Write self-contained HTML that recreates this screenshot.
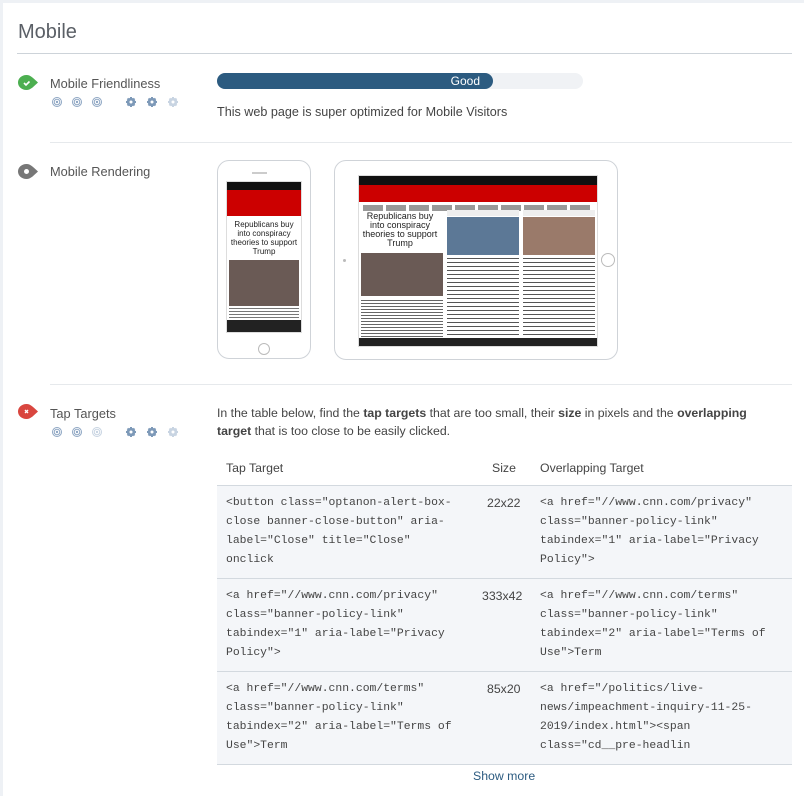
<!DOCTYPE html>
<html><head><meta charset="utf-8"><style>
*{margin:0;padding:0;box-sizing:border-box}
body{width:804px;height:796px;background:#fff;position:relative;overflow:hidden;font-family:"Liberation Sans",sans-serif;color:#444}
.a{position:absolute}
.lbl{font-size:12.8px;color:#555}
.hr{position:absolute;left:50px;right:12px;height:1px;background:#e6e9ec}
.mono{font-family:"Liberation Mono",monospace;font-size:11.4px;line-height:19px;color:#444;white-space:pre}
.row{position:absolute;left:217px;width:575px;height:93px;background:#f4f6f9;border-bottom:1px solid #d3d9df}
.t{font-size:12.3px}
</style></head><body>
<div class="a" style="left:0;top:0;width:804px;height:3px;background:#eef1f5"></div>
<div class="a" style="left:0;top:0;width:3px;height:796px;background:#eef1f5"></div>
<div class="a" style="left:18px;top:21px;font-size:20px;color:#5a5f66">Mobile</div>
<div class="a" style="left:17px;top:53px;width:775px;height:1px;background:#cdd3d9"></div>

<svg width="0" height="0" style="position:absolute"><defs>
<g id="tg"><circle cx="5" cy="5" r="4.5" fill="none" stroke="currentColor" stroke-width="1"/><circle cx="5" cy="5" r="2.8" fill="none" stroke="currentColor" stroke-width="1"/><circle cx="5" cy="5" r="1.2" fill="currentColor"/></g>
<g id="gr"><circle cx="5" cy="5" r="3.3" fill="none" stroke="currentColor" stroke-width="2"/><path d="M5 0V10M0 5H10M1.5 1.5L8.5 8.5M8.5 1.5L1.5 8.5" stroke="currentColor" stroke-width="2"/><circle cx="5" cy="5" r="1.5" fill="#fff"/></g>
<g id="drop"><path d="M9.5 1 C4.5 1 1 4.5 1 8.5 C1 12.5 4.5 16 9.5 16 C14 16 17 12 21 8.5 C17 5 14 1 9.5 1Z" fill="currentColor"/></g>
</defs></svg>

<!-- Row 1 -->
<svg class="a" style="left:17px;top:74px;color:#4caf50" width="22" height="17"><use href="#drop"/><path d="M7 9l2 2 3.5-3.5" stroke="#fff" stroke-width="1.6" fill="none"/></svg>
<div class="a lbl" style="left:50px;top:76px">Mobile Friendliness</div>
<svg class="a" style="left:52px;top:97px" width="130" height="12">
<use href="#tg" x="0" y="0" style="color:#8ea6c3"/><use href="#tg" x="20" y="0" style="color:#8ea6c3"/><use href="#tg" x="40" y="0" style="color:#8ea6c3"/>
<use href="#gr" x="74" y="0" style="color:#7d99b8"/><use href="#gr" x="95" y="0" style="color:#7d99b8"/><use href="#gr" x="116" y="0" style="color:#c8d4e2"/></svg>
<div class="a" style="left:217px;top:73px;width:366px;height:16px;border-radius:8px;background:#f0f2f5"></div>
<div class="a" style="left:217px;top:73px;width:276px;height:16px;border-radius:8px;background:#2c5b80;color:#fff;font-size:12px;line-height:16px;text-align:right;padding-right:13px">Good</div>
<div class="a" style="left:217px;top:105px;font-size:12.6px;color:#444">This web page is super optimized for Mobile Visitors</div>
<div class="hr" style="top:142px"></div>

<!-- Row 2 -->
<svg class="a" style="left:17px;top:163px;color:#777" width="22" height="17"><use href="#drop"/><circle cx="9.5" cy="8.5" r="2.5" fill="#fff"/></svg>
<div class="a lbl" style="left:50px;top:164px">Mobile Rendering</div>
<div class="a" style="left:217px;top:160px;width:94px;height:199px;border:1px solid #cfd3d8;border-radius:12px;background:#fff"></div>
<div class="a" style="left:252px;top:172px;width:15px;height:2px;background:#ccc"></div>
<div class="a" style="left:258px;top:343px;width:12px;height:12px;border:1px solid #bbb;border-radius:50%"></div>
<div class="a" style="left:226px;top:181px;width:76px;height:152px;background:#fff;overflow:hidden;border:1px solid #ddd">
 <div style="height:8px;background:#111"></div><div style="height:26px;background:#c00"></div>
 <div style="font-size:8px;line-height:9px;text-align:center;color:#222;padding:4px 2px">Republicans buy into conspiracy theories to support Trump</div>
 <div style="height:46px;background:#6a5a55;margin:0 2px"></div>
 <div style="height:10px;margin:2px;background:repeating-linear-gradient(#777 0 1px,#fff 1px 3px)"></div>
 <div style="height:20px;background:#222"></div></div>
<div class="a" style="left:334px;top:160px;width:284px;height:200px;border:1px solid #cfd3d8;border-radius:12px;background:#fff"></div>
<div class="a" style="left:601px;top:253px;width:14px;height:14px;border:1px solid #bbb;border-radius:50%"></div>
<div class="a" style="left:343px;top:259px;width:3px;height:3px;border-radius:50%;background:#bbb"></div>
<div class="a" style="left:358px;top:175px;width:240px;height:172px;background:#fff;overflow:hidden;border:1px solid #ddd">
 <div style="height:9px;background:#111"></div><div style="height:17px;background:#c00"></div>
 <div style="height:6px;margin:3px 4px;background:repeating-linear-gradient(90deg,#999 0 20px,#fff 20px 23px)"></div>
 <div style="position:absolute;left:2px;top:36px;width:78px;font-size:9px;line-height:9px;text-align:center;color:#222">Republicans buy into conspiracy theories to support Trump</div>
 <div style="position:absolute;left:2px;top:77px;width:82px;height:43px;background:#6a5a55"></div>
 <div style="position:absolute;left:2px;top:124px;width:82px;height:40px;background:repeating-linear-gradient(#666 0 1px,#fff 1px 3px)"></div>
 <div style="position:absolute;left:88px;top:34px;width:72px;height:6px;background:#eee"></div>
 <div style="position:absolute;left:88px;top:41px;width:72px;height:38px;background:#5c7896"></div>
 <div style="position:absolute;left:88px;top:82px;width:72px;height:82px;background:repeating-linear-gradient(#555 0 1px,#fff 1px 4px)"></div>
 <div style="position:absolute;left:164px;top:34px;width:72px;height:6px;background:#eee"></div>
 <div style="position:absolute;left:164px;top:41px;width:72px;height:38px;background:#9a7a6a"></div>
 <div style="position:absolute;left:164px;top:82px;width:72px;height:82px;background:repeating-linear-gradient(#555 0 1px,#fff 1px 4px)"></div>
 <div style="position:absolute;left:0;bottom:0;width:100%;height:8px;background:#222"></div></div>
<div class="hr" style="top:384px"></div>

<!-- Row 3 -->
<svg class="a" style="left:17px;top:403px;color:#d9463f" width="22" height="17"><use href="#drop"/><path d="M8 7l3 3M11 7l-3 3" stroke="#fff" stroke-width="1.4"/></svg>
<div class="a lbl" style="left:50px;top:406px">Tap Targets</div>
<svg class="a" style="left:52px;top:427px" width="130" height="12">
<use href="#tg" x="0" y="0" style="color:#8ea6c3"/><use href="#tg" x="20" y="0" style="color:#8ea6c3"/><use href="#tg" x="40" y="0" style="color:#c8d4e2"/>
<use href="#gr" x="74" y="0" style="color:#7d99b8"/><use href="#gr" x="95" y="0" style="color:#7d99b8"/><use href="#gr" x="116" y="0" style="color:#c8d4e2"/></svg>
<div class="a" style="left:217px;top:404px;width:560px;font-size:12.3px;line-height:18px;color:#444">In the table below, find the <b>tap targets</b> that are too small, their <b>size</b> in pixels and the <b>overlapping target</b> that is too close to be easily clicked.</div>

<div class="a t" style="left:226px;top:461px">Tap Target</div>
<div class="a t" style="left:492px;top:461px">Size</div>
<div class="a t" style="left:540px;top:461px">Overlapping Target</div>
<div class="a" style="left:217px;top:485px;width:575px;height:1px;background:#d3d9df"></div>

<div class="row" style="top:486px"></div>
<div class="row" style="top:579px"></div>
<div class="row" style="top:672px"></div>

<div class="a mono" style="left:226px;top:494px">&lt;button class="optanon-alert-box-
close banner-close-button" aria-
label="Close" title="Close"
onclick</div>
<div class="a t" style="left:487px;top:496px">22x22</div>
<div class="a mono" style="left:540px;top:494px">&lt;a href="//www.cnn.com/privacy"
class="banner-policy-link"
tabindex="1" aria-label="Privacy
Policy"&gt;</div>

<div class="a mono" style="left:226px;top:587px">&lt;a href="//www.cnn.com/privacy"
class="banner-policy-link"
tabindex="1" aria-label="Privacy
Policy"&gt;</div>
<div class="a t" style="left:482px;top:589px">333x42</div>
<div class="a mono" style="left:540px;top:587px">&lt;a href="//www.cnn.com/terms"
class="banner-policy-link"
tabindex="2" aria-label="Terms of
Use"&gt;Term</div>

<div class="a mono" style="left:226px;top:680px">&lt;a href="//www.cnn.com/terms"
class="banner-policy-link"
tabindex="2" aria-label="Terms of
Use"&gt;Term</div>
<div class="a t" style="left:487px;top:682px">85x20</div>
<div class="a mono" style="left:540px;top:680px">&lt;a href="/politics/live-
news/impeachment-inquiry-11-25-
2019/index.html"&gt;&lt;span
class="cd__pre-headlin</div>

<div class="a t" style="left:473px;top:769px;color:#2c5b80">Show more</div>
</body></html>
